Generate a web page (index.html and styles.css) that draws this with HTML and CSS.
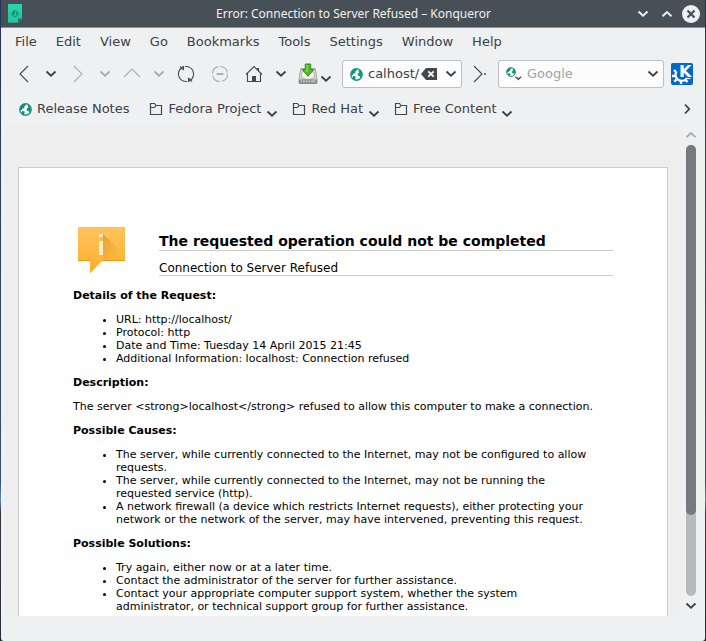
FILE: index.html
```html
<!DOCTYPE html>
<html lang="en">
<head>
<meta charset="utf-8">
<meta name="viewport" content="width=device-width, initial-scale=1">
<title>Error: Connection to Server Refused – Konqueror</title>
<link rel="stylesheet" href="styles.css">
</head>
<body>
<svg class="sprite" aria-hidden="true">
  <symbol id="down" viewBox="0 0 12 8"><path d="M1.5 1.500 6 5.700l4.500-4.200"/></symbol>
  <symbol id="up" viewBox="0 0 12 8"><path d="M1.500 6.200 6 2l4.500 4.200"/></symbol>
  <symbol id="globe" viewBox="0 0 12 12">
    <circle cx="6" cy="6" r="5.300" fill="#fcfcfc" stroke="#16957e" stroke-width="1.200"/>
    <path d="M1 4.500Q2 1.500 5.500.8L6.500 2 4.800 3.200 5 4.500 3.200 5 2.800 6.300 1 7z" fill="#138d76"/>
    <path d="M2.800 7.200 5.400 8 5 9.200 4.500 11 2.500 9.500z" fill="#138d76"/>
    <path d="M8.500 1.500Q11 3 11.200 6L10 9.500 8.800 7.600 7 6.800 7.200 5 8.600 4.200 7.800 2.800z" fill="#16957e"/>
  </symbol>
  <symbol id="folder" viewBox="0 0 14 14"><path d="M1.500 12.500v-11h4l1.500 2h5.500v9zM1.500 5.500h4l1.500-2h5.500" fill="none" stroke="#45494d" stroke-width="1.200"/></symbol>
</svg>
<div class="window">
  <header class="titlebar">
    <svg class="app-icon" viewBox="0 0 14 19"><path d="M0 0h14v14.500l-4 4H0z" fill="#2bd0ad"/><path d="M0 8h14v6.500l-4 4H0z" fill="#1abc9c" opacity=".5"/><path d="M10 18.500v-4h4z" fill="#117f68"/><circle cx="7" cy="9.500" r="3" fill="none" stroke="#15967c"/><path d="M4 9l3-2.500v2L6 11zM8 8l2 1-1 3z" fill="#12826c"/></svg>
    <h1 class="window-title">Error: Connection to Server Refused – Konqueror</h1>
    <div class="window-buttons">
      <button type="button" aria-label="Minimize"><svg class="chevron" viewBox="0 0 12 8"><use href="#down"/></svg></button>
      <button type="button" aria-label="Maximize"><svg class="chevron" viewBox="0 0 12 8"><use href="#up"/></svg></button>
      <button type="button" aria-label="Close"><svg class="close" viewBox="0 0 18 18"><circle cx="9" cy="9" r="9" fill="#eff0f1"/><path d="m5.500 5.500 7 7m0-7-7 7" stroke="#475057" stroke-width="2.200"/></svg></button>
    </div>
  </header>

  <nav class="menubar" aria-label="Main menu">
    <button type="button">File</button>
    <button type="button">Edit</button>
    <button type="button">View</button>
    <button type="button">Go</button>
    <button type="button">Bookmarks</button>
    <button type="button">Tools</button>
    <button type="button">Settings</button>
    <button type="button">Window</button>
    <button type="button">Help</button>
  </nav>

  <div class="toolbar">
    <button type="button" aria-label="Back"><svg class="nav-icon" viewBox="0 0 18 18"><path d="M13 1 5 9l8 8"/></svg></button>
    <button type="button" aria-label="Back history"><svg class="chevron" viewBox="0 0 12 8"><use href="#down"/></svg></button>
    <button type="button" aria-label="Forward" disabled><svg class="nav-icon" viewBox="0 0 18 18"><path d="m5 1 8 8-8 8"/></svg></button>
    <button type="button" aria-label="Forward history" disabled><svg class="chevron" viewBox="0 0 12 8"><use href="#down"/></svg></button>
    <button type="button" aria-label="Up" disabled><svg class="nav-icon" viewBox="0 0 18 18"><path d="m1 12 8-8 8 8"/></svg></button>
    <button type="button" aria-label="Up history" disabled><svg class="chevron" viewBox="0 0 12 8"><use href="#down"/></svg></button>
    <button type="button" aria-label="Reload"><svg class="nav-icon" viewBox="0 0 18 18"><path d="M6.500 5V1.500L4.500 3A7.500 7.500 0 0 0 5 15.400M11.500 13v3.500l2-1.500A7.500 7.500 0 0 0 13 2.600M3 1.500 6.500 5M15 16.500 11.500 13M8 1.500Q11 1.300 13 2.600M10 16.500Q7 16.700 5 15.400"/></svg></button>
    <button type="button" class="wide" aria-label="Stop" disabled><svg class="nav-icon" viewBox="0 0 18 18"><circle cx="9" cy="9" r="7.500" stroke-dasharray="10 1.780"/><path d="M5.500 9h7" stroke-width="2"/></svg></button>
    <button type="button" aria-label="Home"><svg class="nav-icon" viewBox="0 0 18 18"><path d="M1 9.500 9 1.500l8 8M2.500 8.500v8h13v-8"/><path class="solid" d="M7 11h4v5.500H7zM11.500 3H14v4z"/></svg></button>
    <button type="button" aria-label="Home menu"><svg class="chevron" viewBox="0 0 12 8"><use href="#down"/></svg></button>
    <button type="button" class="save" aria-label="Save">
      <svg class="save-icon" viewBox="0 0 22 24">
        <path d="M3 6h16l2 12v3.500H1V18z" fill="#d4d4d2" stroke="#9b9b98" stroke-width=".8"/>
        <ellipse cx="11" cy="13" rx="7.500" ry="5" fill="#f4f4f2" stroke="#aaa"/>
        <path d="M1 18h20v4q0 1-1 1H2q-1 0-1-1z" fill="#8a8b8a"/><path d="M3 19h16v2H3z" fill="#c4c4c2"/><path d="M5 18v3m3-3v3m3-3v3m3-3v3" stroke="#777877" stroke-width=".8"/>
        <path d="M8 1h6v6h3.500L11 14.500 4.500 7H8z" fill="#50b92b" stroke="#2c8a14"/><path d="M9 2h2v9L7 8h2z" fill="#8bdd62" opacity=".7"/>
      </svg>
      <svg class="chevron low" viewBox="0 0 12 8"><use href="#down"/></svg>
    </button>
    <div class="field location">
      <svg class="globe" viewBox="0 0 12 12"><use href="#globe"/></svg>
      <input type="text" value="calhost/" aria-label="Location">
      <button type="button" aria-label="Clear location"><svg class="clear" viewBox="0 0 16 12"><path d="M0 6 5 0h11v12H5z" fill="#45494d"/><path d="m7.300 3.300 5.400 5.400m0-5.400L7.300 8.700" stroke="#fcfcfc" stroke-width="1.700"/></svg></button>
      <button type="button" class="drop" aria-label="Location history"><svg class="chevron" viewBox="0 0 12 8"><use href="#down"/></svg></button>
    </div>
    <button type="button" class="go" aria-label="Go"><svg class="nav-icon" viewBox="0 0 18 18"><path d="m3 1 8 8-8 8"/><circle class="solid" cx="14" cy="9" r="1"/></svg></button>
    <div class="field search">
      <button type="button" class="engine" aria-label="Search engine"><svg class="engine-icon" viewBox="0 0 16 14"><svg width="10" height="10" viewBox="0 0 12 12"><use href="#globe"/></svg><path d="m9.500 9.800 2.800 2.500 2.800-2.500" fill="none" stroke="#45494d" stroke-width="1.500"/></svg></button>
      <input type="text" placeholder="Google" aria-label="Search">
      <button type="button" class="drop" aria-label="Search history"><svg class="chevron" viewBox="0 0 12 8"><use href="#down"/></svg></button>
    </div>
    <svg class="logo" viewBox="0 0 22 22" role="img" aria-label="KDE">
      <rect width="22" height="22" rx="2" fill="#0068c9"/>
      <path d="M5.500 8.500A6 6 0 1 0 16 15" fill="none" stroke="#fff" stroke-width="2.200"/>
      <path d="M5 9 3 7M4 13H1M5.500 16.500l-2.200 2.200M10 18v3M14.500 17l2 2M16.500 14.500l3 .5" stroke="#fff" stroke-width="2.400"/>
      <text x="8" y="14" class="logo-letter">K</text>
    </svg>
  </div>

  <nav class="bookmarks" aria-label="Bookmarks">
    <a href="#notes"><svg class="globe" viewBox="0 0 12 12"><use href="#globe"/></svg>Release Notes</a>
    <button type="button"><svg class="folder" viewBox="0 0 14 14"><use href="#folder"/></svg>Fedora Project<svg class="chevron low" viewBox="0 0 12 8"><use href="#down"/></svg></button>
    <button type="button"><svg class="folder" viewBox="0 0 14 14"><use href="#folder"/></svg>Red Hat<svg class="chevron low" viewBox="0 0 12 8"><use href="#down"/></svg></button>
    <button type="button"><svg class="folder" viewBox="0 0 14 14"><use href="#folder"/></svg>Free Content<svg class="chevron low" viewBox="0 0 12 8"><use href="#down"/></svg></button>
    <button type="button" class="more" aria-label="More bookmarks"><svg class="chevron-right" viewBox="0 0 8 12"><path d="m2 1.500 4.200 4.500L2 10.500"/></svg></button>
  </nav>

  <div class="view">
    <main class="viewport">
      <article class="page">
        <header class="summary">
          <svg class="info" viewBox="0 0 48 48">
            <defs><linearGradient id="amber" x2="0" y2="1"><stop stop-color="#ffc35a"/><stop offset="1" stop-color="#fbae30"/></linearGradient><linearGradient id="shade" x2="1" y2="1"><stop stop-color="#c98d25" stop-opacity=".65"/><stop offset="1" stop-color="#f0a830" stop-opacity="0"/></linearGradient></defs>
            <path d="M0 0h47v34H24L12 46.500V34H0z" fill="url(#amber)"/>
            <path d="M0 33.500h12M24 33.500h23" stroke="#ee9a10"/>
            <path d="M25 7 41 22l-6 10H25z" fill="url(#shade)"/>
            <path d="M21 7h4v3h-4zM21 14h4v14h-4z" fill="#ffedcb"/>
          </svg>
          <div class="headings">
            <h2>The requested operation could not be completed</h2>
            <p>Connection to Server Refused</p>
          </div>
        </header>
        <h3>Details of the Request:</h3>
        <ul>
          <li>URL: http://localhost/</li>
          <li>Protocol: http</li>
          <li>Date and Time: Tuesday 14 April 2015 21:45</li>
          <li>Additional Information: localhost: Connection refused</li>
        </ul>
        <h3>Description:</h3>
        <p>The server &lt;strong&gt;localhost&lt;/strong&gt; refused to allow this computer to make a connection.</p>
        <h3>Possible Causes:</h3>
        <ul>
          <li>The server, while currently connected to the Internet, may not be configured to allow requests.</li>
          <li>The server, while currently connected to the Internet, may not be running the requested service (http).</li>
          <li>A network firewall (a device which restricts Internet requests), either protecting your network or the network of the server, may have intervened, preventing this request.</li>
        </ul>
        <h3>Possible Solutions:</h3>
        <ul>
          <li>Try again, either now or at a later time.</li>
          <li>Contact the administrator of the server for further assistance.</li>
          <li>Contact your appropriate computer support system, whether the system administrator, or technical support group for further assistance.</li>
        </ul>
      </article>
    </main>
    <div class="scrollbar">
      <button type="button" aria-label="Scroll up" disabled><svg class="chevron" viewBox="0 0 12 8"><use href="#up"/></svg></button>
      <div class="track"><div class="thumb"></div></div>
      <button type="button" aria-label="Scroll down"><svg class="chevron" viewBox="0 0 12 8"><use href="#down"/></svg></button>
    </div>
  </div>
</div>
</body>
</html>
```
FILE: styles.css
```css
* { box-sizing: border-box; }

body {
  margin: 0;
  padding: 0 1px;
  background: linear-gradient(#1f3358, #35507f 75%, #5a86b5 78%, #3a3440 80%, #252b3a);
  color: #3b4045;
  font: 13px/18px "DejaVu Sans", sans-serif;
}

button {
  display: flex;
  align-items: center;
  justify-content: center;
  margin: 0;
  padding: 0;
  border: 0;
  background: none;
  color: inherit;
  font: inherit;
}

svg { display: block; flex: none; }
.sprite { position: absolute; width: 0; height: 0; }

.chevron, .chevron-right { fill: none; stroke: #3b4045; stroke-width: 1.8; }
.chevron { width: 12px; height: 8px; }
.chevron-right { width: 8px; height: 12px; }
button:disabled .chevron { stroke: #a9abad; }

.window {
  display: flex;
  flex-direction: column;
  height: 100vh;
  overflow: hidden;
  padding-bottom: 25px;
  border-radius: 0 0 3px 3px;
  background: #eff0f1;
}

.titlebar {
  display: grid;
  grid-template-columns: 80px 1fr 80px;
  align-items: center;
  flex: none;
  height: 28px;
  padding: 0 5px 0 6px;
  border-bottom: 1px solid #3daee9;
  background: #475057;
}
.app-icon { width: 14px; height: 19px; margin-left: 1px; }
.window-title {
  margin: 0;
  color: #eff0f1;
  font: 12px/18px "Noto Sans", sans-serif;
  text-align: center;
}
.window-buttons { display: flex; justify-content: flex-end; align-items: center; gap: 12px; }
.window-buttons .chevron { stroke: #eff0f1; stroke-width: 2; }
.window-buttons button:last-child { margin-left: -3px; }
.close { width: 18px; height: 18px; }

.menubar { display: flex; flex: none; gap: 19px; height: 27px; padding-left: 14px; }

.toolbar {
  display: flex;
  align-items: center;
  flex: none;
  height: 38px;
  padding: 0 12px 0 9px;
}
.toolbar > button { width: 27px; height: 28px; flex: none; }
.toolbar > .wide { width: 41px; }
.toolbar > .save { width: 38px; justify-content: flex-start; gap: 2px; margin: 0 6px 0 4px; }
.toolbar > .go { width: 36px; }
.nav-icon { width: 18px; height: 18px; fill: none; stroke: #45494d; stroke-width: 1.1; }
.nav-icon .solid { fill: #45494d; stroke: none; }
button:disabled .nav-icon { stroke: #acaeb0; }
.save-icon { width: 20px; height: 22px; }
.low { margin-top: 10px; }

.field {
  display: flex;
  align-items: center;
  height: 28px;
  padding: 0 4px 0 7px;
  border: 1px solid #bcbebf;
  border-radius: 3px;
  background: #fcfcfc;
}
.field input {
  flex: 1;
  min-width: 0;
  width: 0;
  padding: 0;
  border: 0;
  background: none;
  color: #3b4045;
  font: inherit;
}
.field input::placeholder { color: #a2a4a5; opacity: 1; }
.location { width: 120px; flex: none; }
.location input { margin-left: 5px; }
.drop { margin-left: 8px; }
.search { flex: 1; }
.search input { margin-left: 5px; }
.engine-icon { width: 16px; height: 14px; }
.globe { width: 13px; height: 13px; }
.clear { width: 16px; height: 12px; }
.logo { width: 22px; height: 22px; margin-left: 7px; }
.logo-letter { fill: #fff; stroke: #0068c9; stroke-width: 2px; paint-order: stroke; font: bold 16px "DejaVu Sans", sans-serif; }

.bookmarks {
  display: flex;
  align-items: center;
  flex: none;
  height: 32px;
  padding: 0 14px 0 18px;
}
.bookmarks a { display: flex; align-items: center; gap: 5px; margin-right: 20px; color: inherit; text-decoration: none; }
.bookmarks button { gap: 5px; margin-right: 14px; }
.bookmarks .low { margin-top: 9px; }
.bookmarks .more { margin: 0 0 0 auto; }
.folder { width: 14px; height: 14px; }

.view { display: flex; flex: 1; min-height: 0; }
.viewport {
  flex: 1;
  min-width: 0;
  overflow: hidden;
  margin-left: 4px;
  padding: 42px 13px 0;
  background: #eee;
}
.page {
  min-height: 100%;
  padding: 59px 54px 20px;
  border: 1px solid #ccc;
  background: #fff;
  color: #000;
  font-size: 11px;
  line-height: 13px;
}
.page h3, .page p, .page ul { margin: 0 0 11px; font-size: 11px; }
.page ul { padding: 0 16px 0 43px; }

.summary { display: flex; margin-bottom: 13px; padding-left: 5px; }
.info { width: 48px; height: 48px; }
.headings { flex: 1; margin-left: 33px; padding-top: 6px; }
.page h2 { margin: 0 0 10px; border-bottom: 1px solid #ccc; font-size: 14px; line-height: 17px; }
.page .headings p { margin: 0; border-bottom: 1px solid #ccc; font-size: 12px; line-height: 14px; }

.scrollbar {
  display: flex;
  flex-direction: column;
  align-items: center;
  flex: none;
  width: 20px;
  margin-right: 4px;
}
.scrollbar button { width: 20px; height: 20px; }
.track { flex: 1; width: 10px; border-radius: 5px; background: #b7b9bc; }
.thumb { height: 82%; border-radius: 5px; background: #757980; }
```
